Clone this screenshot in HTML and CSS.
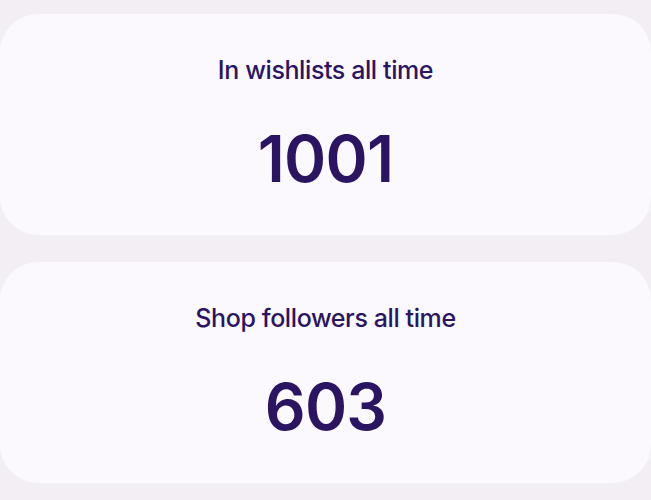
FILE: index.html
```html
<!DOCTYPE html>
<html>
<head>
<meta charset="utf-8">
<link rel="stylesheet" href="styles.css">
</head>
<body>
<div class="stats">
  <div class="card">
    <div class="label">In wishlists all time</div>
    <div class="value">1001</div>
  </div>
  <div class="card">
    <div class="label">Shop followers all time</div>
    <div class="value">603</div>
  </div>
</div>
</body>
</html>
```
FILE: styles.css
```css
html, body {
  margin: 0;
  padding: 0;
  background: #f2eef4;
}
body {
  font-family: Inter, "Noto Sans", sans-serif;
  color: #2b1563;
}
.stats {
  display: flex;
  flex-direction: column;
  gap: 27px;
  padding-top: 14px;
}
.card {
  height: 221px;
  background: #fbf9fd;
  border-radius: 38px;
  display: flex;
  flex-direction: column;
  align-items: center;
  box-sizing: border-box;
  padding-top: 40px;
}
.label {
  font-size: 25px;
  font-weight: 500;
  letter-spacing: -0.4px;
  line-height: 32px;
}
.value {
  margin-top: 38px;
  font-size: 64px;
  font-weight: 600;
  letter-spacing: -0.8px;
  line-height: 70px;
}
```
